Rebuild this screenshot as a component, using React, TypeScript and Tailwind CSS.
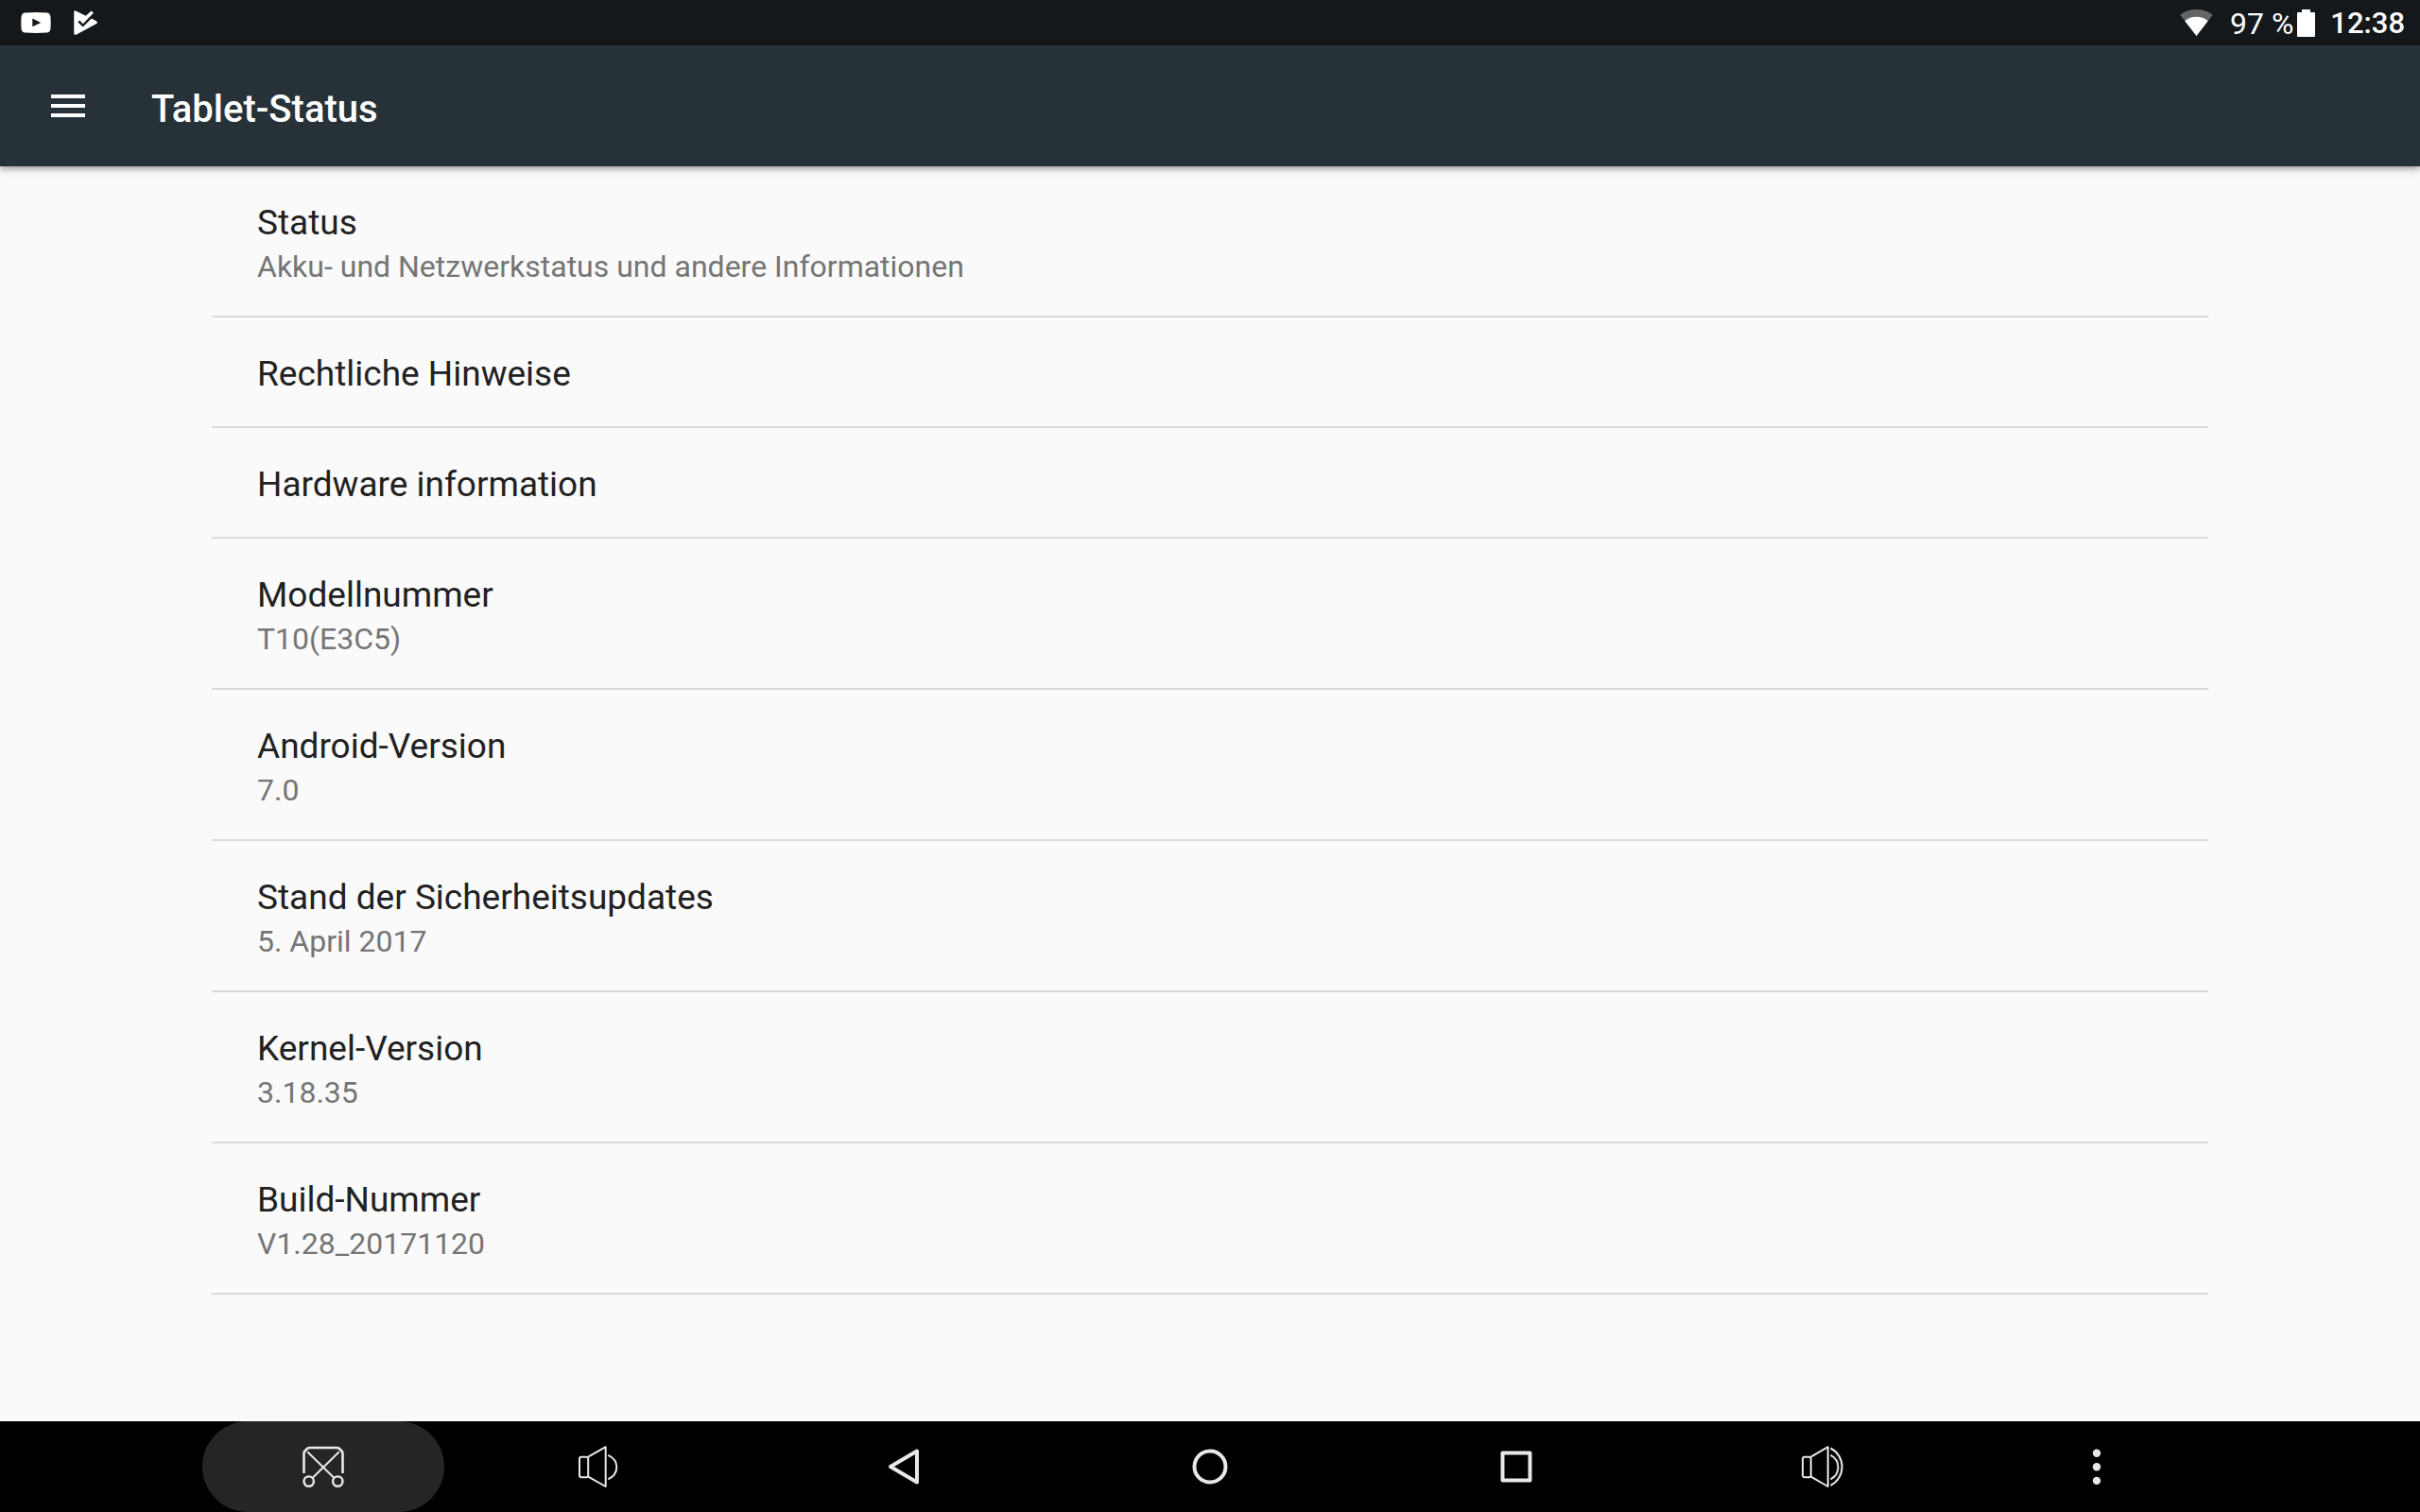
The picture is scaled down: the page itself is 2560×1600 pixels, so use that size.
import { useState } from "react";
import type { ReactNode } from "react";

type Entry = { title: string; summary?: string };

const ENTRIES: Entry[] = [
  { title: "Status", summary: "Akku- und Netzwerkstatus und andere Informationen" },
  { title: "Rechtliche Hinweise" },
  { title: "Hardware information" },
  { title: "Modellnummer", summary: "T10(E3C5)" },
  { title: "Android-Version", summary: "7.0" },
  { title: "Stand der Sicherheitsupdates", summary: "5. April 2017" },
  { title: "Kernel-Version", summary: "3.18.35" },
  { title: "Build-Nummer", summary: "V1.28_20171120" },
];

function YoutubeIcon() {
  return (
    <svg viewBox="0 0 32 22" className="h-[22px] w-8" fill="#fff" aria-hidden="true">
      <path
        fillRule="evenodd"
        d="M4.5.4Q16-.3 27.500.4Q31 .6 31.400 4.500Q32 11 31.400 17.500Q31 21.400 27.500 21.600Q16 22.300 4.500 21.600Q1 21.400.6 17.500Q0 11 .6 4.500Q1 .6 4.500.4ZM12.300 6.500V15.300L21.200 10.900Z"
      />
    </svg>
  );
}

function PlayCheckIcon() {
  return (
    <svg viewBox="0 0 26 26" className="h-[26px] w-[26px]" aria-hidden="true">
      <path
        fill="#fff"
        d="M.3 1.200Q.5-.3 2 .4L12.800 5.800L18.600.4L20.900 2.700L9.800 14.200L6.200 10.600L4.400 12.400L9.800 17.600L18.800 8.600L24.200 11.600Q25.600 12.800 24.200 14L3 25.400Q.6 26.500.3 24.500Z"
      />
    </svg>
  );
}

function WifiIcon() {
  return (
    <svg viewBox="0 0 35 28" className="h-7 w-[35px]" aria-hidden="true">
      <path fill="#636567" d="M.3 5.800Q7.500 0 17.500 0Q27.500 0 34.700 5.800L17.500 28Z" />
      <path fill="#fff" d="M5.300 12.200Q10.500 7.800 17.500 7.800Q24.500 7.800 29.700 12.200L17.500 28Z" />
    </svg>
  );
}

function BatteryIcon() {
  return (
    <svg viewBox="0 0 19 29" className="h-[29px] w-[19px]" fill="#fff" aria-hidden="true">
      <path d="M5 0H14V3H18Q19 3 19 4V28Q19 29 18 29H1Q0 29 0 28V4Q0 3 1 3H5Z" />
    </svg>
  );
}

function NavIcon({ children, width = 4 }: { children: ReactNode; width?: number }) {
  return (
    <svg
      viewBox="0 0 44 44"
      className="h-11 w-11"
      fill="none"
      stroke="#e8e8e8"
      strokeWidth={width}
      strokeLinejoin="round"
      aria-hidden="true"
    >
      {children}
    </svg>
  );
}

// Tasten zwischen Screenshot und Menü
const NAV_KEYS = [
  {
    label: "Leiser",
    icon: (
      <NavIcon width={2}>
        <rect x="3" y="11.700" width="9.200" height="21.600" rx="2" />
        <path d="M12.200 11.700L30.700 1.200V43L12.200 32.600M33.300 9.800A17 14.500 0 0 1 33.300 35.400" />
      </NavIcon>
    ),
  },
  {
    label: "Zurück",
    icon: (
      <NavIcon>
        <path d="M8 22L36 5.500V38.500Z" />
      </NavIcon>
    ),
  },
  {
    label: "Startseite",
    icon: (
      <NavIcon>
        <circle cx="22" cy="22" r="16.500" />
      </NavIcon>
    ),
  },
  {
    label: "Übersicht",
    icon: (
      <NavIcon>
        <rect x="7.500" y="7.500" width="29" height="29" />
      </NavIcon>
    ),
  },
  {
    label: "Lauter",
    icon: (
      <NavIcon width={2}>
        <rect x="1" y="11.700" width="8.700" height="21.600" rx="2" />
        <path d="M9.700 11.700L27.700 1.200V43L9.700 32.600" />
        <path d="M30.500 9.800A15 14.500 0 0 1 30.500 35.400M30.500 2.500A22 22 0 0 1 30.500 41.800" />
      </NavIcon>
    ),
  },
];

export default function App() {
  const [selected, setSelected] = useState<string | null>(null);

  return (
    <div className="flex min-h-screen flex-col bg-[#fafafa] font-[Roboto,sans-serif]">
      {/* Statusleiste */}
      <div className="flex h-12 items-center justify-between bg-[#14181b] pr-4 pl-[22px] leading-[48px] text-white">
        <div className="flex items-center gap-6">
          <YoutubeIcon />
          <PlayCheckIcon />
        </div>
        <div className="flex items-center">
          <WifiIcon />
          <span className="ml-[18px] pt-px text-[32px]">97 %</span>
          <span className="ml-1">
            <BatteryIcon />
          </span>
          <span className="ml-4 pt-px text-[31px] font-medium">12:38</span>
        </div>
      </div>

      <header className="relative flex h-32 items-center gap-16 bg-[#273238] px-12 shadow-[0_2px_8px_rgba(0,0,0,0.45)]">
        <button aria-label="Menü" className="cursor-pointer">
          <svg viewBox="0 0 24 24" className="h-12 w-12" fill="#fff" aria-hidden="true">
            <path d="M3 18h18v-2H3v2zm0-5h18v-2H3v2zm0-7v2h18V6H3z" />
          </svg>
        </button>
        <h1 className="pt-2 text-[40px] leading-[56px] font-medium text-white">Tablet-Status</h1>
      </header>

      <main className="flex-1 px-56">
        <ul>
          {ENTRIES.map((entry) => (
            <li key={entry.title} className="border-b-2 border-[#dadada]">
              <button
                onClick={() => setSelected(entry.title)}
                aria-pressed={selected === entry.title}
                className="block w-full cursor-pointer px-12 pt-[35px] pb-[30px] text-left"
              >
                <span className="block text-[37px] leading-[50px] text-[#212121]">{entry.title}</span>
                {entry.summary && (
                  <span className="block text-[32px] leading-[43px] text-[#757575]">{entry.summary}</span>
                )}
              </button>
            </li>
          ))}
        </ul>
      </main>

      {/* Navigationsleiste */}
      <nav className="flex h-24 bg-black px-[214px]">
        <button aria-label="Screenshot" className="flex w-64 cursor-pointer items-center justify-center rounded-full bg-[#252525]">
          <NavIcon width={2}>
            <path d="M1.500 29V8Q1.500 6.500 2.500 5.500L5 3Q6 2 7.500 2H36.500Q38 2 39 3L41.500 5.500Q42.500 6.500 42.500 8V29" strokeWidth="2.600" />
            <path d="M5.200 6.200L33.500 34M38.800 6.200L10.500 34" />
            <circle cx="6.700" cy="37.600" r="5.200" strokeWidth="2.400" />
            <circle cx="37.300" cy="37.600" r="5.200" strokeWidth="2.400" />
          </NavIcon>
        </button>
        {NAV_KEYS.map((key) => (
          <button key={key.label} aria-label={key.label} className="flex flex-1 cursor-pointer items-center justify-center">
            {key.icon}
          </button>
        ))}
        <button aria-label="Weitere Optionen" className="flex w-64 cursor-pointer items-center justify-center">
          <svg viewBox="0 0 44 44" className="h-11 w-11" fill="#e8e8e8" aria-hidden="true">
            <circle cx="22" cy="7.800" r="4.200" />
            <circle cx="22" cy="22.300" r="4.200" />
            <circle cx="22" cy="36.900" r="4.200" />
          </svg>
        </button>
      </nav>
    </div>
  );
}
